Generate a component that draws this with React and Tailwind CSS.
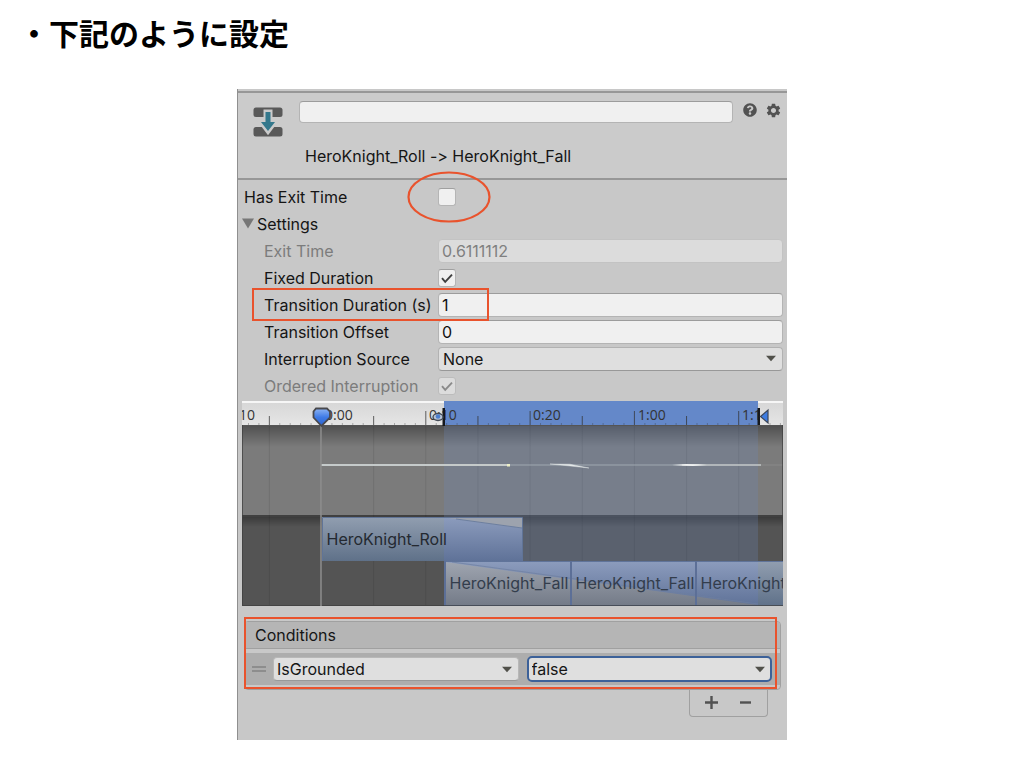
import React, { useState } from 'react';
import { FaQuestionCircle } from 'react-icons/fa';
import { MdSettings } from 'react-icons/md';

const rulerLabels = [
  { x: -3, text: '10' },
  { x: 83, text: '0:00' },
  { x: 187, text: '0:10' },
  { x: 291, text: '0:20' },
  { x: 396, text: '1:00' },
  { x: 500, text: '1:1' },
];

const ticks = Array.from({ length: 52 }, (_, i) => ({
  x: 79.5 + (i - 7) * 10.43,
  major: (i - 7) % 10 === 0,
  mid: (i - 7) % 5 === 0,
})).filter((tick) => tick.x < 541);

const fallClips = [
  { x: 203, width: 125 },
  { x: 329, width: 124 },
  { x: 454, width: 87 },
];

function Caret() {
  return (
    <svg viewBox="0 0 12 7" className="pointer-events-none absolute right-1.5 h-[7px] w-3" aria-hidden="true">
      <path d="M1 0.8h10L6 6.300z" fill="#50504a" />
    </svg>
  );
}

function Checkbox({ id, checked, disabled, onChange }) {
  return (
    <span className="relative flex h-[18px] w-[18px]">
      <input
        id={id}
        type="checkbox"
        checked={checked}
        disabled={disabled}
        onChange={onChange}
        className="h-[18px] w-[18px] appearance-none rounded-[3px] border border-[#b5b5b5] border-t-[#a0a0a0] bg-[#f0f0f0] disabled:border-[#bcbcbc] disabled:bg-[#dcdcdc]"
      />
      {checked && (
        <svg viewBox="0 0 18 18" className="pointer-events-none absolute inset-0" aria-hidden="true">
          <path d="M4 9.2l3.2 3.6L14 5.6" fill="none" stroke={disabled ? '#8a8a8a' : '#3f3f3f'} strokeWidth="1.9" />
        </svg>
      )}
    </span>
  );
}

function TextField({ id, value, disabled, onChange }) {
  return (
    <input
      id={id}
      type="text"
      value={value}
      disabled={disabled}
      onChange={onChange}
      className="h-6 w-full rounded-[4px] border border-[#b4b4b4] border-t-[#9c9c9c] bg-[#f0f0f0] px-[3px] text-base text-[#111] disabled:border-[#c3c3c3] disabled:bg-[#dcdcdc] disabled:text-[#808080]"
    />
  );
}

function Row({ id, label, disabled, top, children, mark }) {
  return (
    <div className="relative flex h-[27px] items-center pr-1">
      <label
        htmlFor={id}
        className={`w-[200px] shrink-0 whitespace-nowrap ${top ? 'pl-1.5' : 'pl-[26px]'} ${disabled ? 'text-[#7c7c7c]' : ''}`}
      >
        {label}
      </label>
      <div className="flex flex-1 items-center">{children}</div>
      {mark}
    </div>
  );
}

function TransitionIcon() {
  return (
    <svg viewBox="0 0 30 30" className="h-[30px] w-[30px]" aria-hidden="true">
      <rect x="0.5" y="0.5" width="29" height="9.5" rx="2.5" fill="#595959" />
      <rect x="0.5" y="20" width="29" height="9.5" rx="2.5" fill="#595959" />
      <path d="M12.5 4.5h5v10.5h5L15 25 7.5 15h5z" fill="#cbcbcb" stroke="#cbcbcb" strokeWidth="4" />
      <path d="M12.5 5h5v10H22L15 24 8 15h4.500z" fill="#34788c" />
    </svg>
  );
}

function Timeline() {
  return (
    <svg
      viewBox="0 0 541 205"
      className="block w-full"
      fontFamily="Inter, 'Liberation Sans', sans-serif"
      fontSize="16"
      role="img"
      aria-label="Transition timeline"
    >
      <defs>
        <linearGradient id="ruler" x1="0" y1="0" x2="0" y2="1">
          <stop offset="0" stopColor="#d6d6d6" />
          <stop offset="1" stopColor="#e6e6e6" />
        </linearGradient>
        <linearGradient id="shade" x1="0" y1="0" x2="0" y2="1">
          <stop offset="0" stopColor="#000" stopOpacity="0.36" />
          <stop offset="1" stopColor="#000" stopOpacity="0" />
        </linearGradient>
        <linearGradient id="clip" x1="0" y1="0" x2="0" y2="1">
          <stop offset="0" stopColor="#919eb0" />
          <stop offset="1" stopColor="#5f7189" />
        </linearGradient>
        <linearGradient id="clipSelected" x1="0" y1="0" x2="0" y2="1">
          <stop offset="0" stopColor="#8c9cbd" />
          <stop offset="1" stopColor="#5f7298" />
        </linearGradient>
        <linearGradient id="fade" x1="0" y1="0" x2="0" y2="1">
          <stop offset="0" stopColor="#a0a6b1" />
          <stop offset="1" stopColor="#737a87" />
        </linearGradient>
        <linearGradient id="marker" x1="0" y1="0" x2="0" y2="1">
          <stop offset="0" stopColor="#8db4f4" />
          <stop offset="0.5" stopColor="#3f7be6" />
          <stop offset="1" stopColor="#2c62cc" />
        </linearGradient>
        {fallClips.map((clip, i) => (
          <clipPath id={`fall${i}`} key={clip.x}>
            <rect x={clip.x} y="160" width={clip.width} height="44" />
          </clipPath>
        ))}
      </defs>

      {/* Ruler */}
      <rect width="541" height="25" fill="url(#ruler)" />
      <rect width="541" height="2" fill="#f6f6f6" />
      <rect x="202" width="314" height="25" fill="#6488c9" />
      {ticks.map((tick) => (
        <line
          key={tick.x}
          x1={tick.x}
          x2={tick.x}
          y1={tick.major ? 10 : tick.mid ? 15 : 22}
          y2="24"
          stroke="#333"
          strokeOpacity={tick.mid ? 0.75 : 0.35}
        />
      ))}
      <g fill="#333" fontSize="14" fontFamily="'Open Sans', sans-serif">
        {rulerLabels.map((label) => (
          <text key={label.x} x={label.x} y="19">{label.text}</text>
        ))}
      </g>

      {/* Tracks */}
      <rect y="24" width="541" height="90" fill="#7b7b7b" />
      <rect y="24" width="541" height="22" fill="url(#shade)" />
      <rect y="24" width="541" height="1" fill="#555" />
      <rect y="114" width="541" height="91" fill="#545454" />
      <rect y="114" width="541" height="12" fill="url(#shade)" />
      <rect y="114" width="541" height="2" fill="#404040" />
      {ticks.filter((tick) => tick.mid).map((tick) => (
        <line key={tick.x} x1={tick.x} x2={tick.x} y1="25" y2="204" stroke="#000" strokeOpacity="0.09" />
      ))}
      <rect x="202" y="25" width="314" height="180" fill="#6c86bc" fillOpacity="0.25" />

      {/* Curve */}
      <line x1="79" x2="266" y1="64" y2="64" stroke="#c5caca" strokeWidth="2" />
      <line x1="266" x2="440" y1="64" y2="64" stroke="#a0a8b0" />
      <line x1="440" x2="519" y1="64" y2="64" stroke="#c5caca" strokeWidth="1.5" />
      <line x1="519" x2="541" y1="64" y2="64" stroke="#8a8a8a" />
      <rect x="265" y="63" width="3" height="2.5" fill="#eef0c8" />
      <path d="M308 63L328 63.2L347 67L326 64.800z" fill="#e4e8e8" stroke="#e4e8e8" strokeWidth="0.4" />
      <path d="M430 64l14-1 12 .2 9 .8-14 1-9-.2z" fill="#f0f2f2" />

      {/* Source clip */}
      <rect x="80" y="116" width="122" height="44" fill="url(#clip)" />
      <rect x="202" y="116" width="78" height="44" fill="url(#clipSelected)" />
      <path d="M206 117L280 127V117z" fill="#9da3ae" />
      <path d="M214 118L280 127" stroke="#6d7f9f" fill="none" />
      <path d="M80.500 160V116.500H280.500V160" fill="none" stroke="#607497" />
      <text x="84.500" y="144" fill="#242930">HeroKnight_Roll</text>

      {/* Destination clips */}
      <rect x="202" y="160" width="314" height="45" fill="url(#clipSelected)" />
      <rect x="516" y="160" width="25" height="45" fill="url(#clip)" />
      <clipPath id="fadeArea">
        <path d="M203 161L516 204H203z" />
      </clipPath>
      <rect x="203" y="160" width="313" height="45" fill="url(#fade)" clipPath="url(#fadeArea)" />
      <path d="M210 161L516 203" stroke="#6d7f9f" strokeOpacity="0.7" fill="none" />
      <path d="M202 160.500H541" stroke="#60749a" fill="none" />
      {fallClips.map((clip, i) => (
        <g key={clip.x}>
          <rect x={clip.x - 1} y="160" width="2" height="45" fill="#5c6f97" />
          <text x={clip.x + 4.5} y="188" fill="#333d4c" clipPath={`url(#fall${i})`}>HeroKnight_Fall</text>
        </g>
      ))}
      <path d="M0.500 24V204.500H541M540.500 24V160" stroke="#3d3d3d" fill="none" strokeOpacity="0.7" />

      {/* Playhead and range handles */}
      <line x1="79" x2="79" y1="25" y2="205" stroke="#8f8f8f" strokeWidth="1.5" />
      <path d="M74 7.500h11l3 3v6L79.500 25 71.500 16.500v-6z" fill="url(#marker)" stroke="#48484c" strokeWidth="1.8" />
      <rect x="200.500" y="7" width="2.500" height="18" fill="#16181c" />
      <ellipse cx="196" cy="16" rx="5" ry="3.500" fill="#b9c4d6" stroke="#444b56" strokeWidth="1.4" />
      <circle cx="196" cy="15.500" r="2.300" fill="#4d7fce" />
      <rect x="515.500" y="7" width="2.500" height="17" fill="#16181c" />
      <path d="M518.500 15.500L526 9V22z" fill="#3e7ce0" stroke="#3c4658" strokeWidth="1.2" />
    </svg>
  );
}

function App() {
  const [name, setName] = useState('');
  const [hasExitTime, setHasExitTime] = useState(false);
  const [fixedDuration, setFixedDuration] = useState(true);
  const [duration, setDuration] = useState('1');
  const [offset, setOffset] = useState('0');
  const [source, setSource] = useState('None');
  const [parameter, setParameter] = useState('IsGrounded');
  const [value, setValue] = useState('false');

  return (
    <main className="min-h-screen bg-white pb-7">
      <h1 className="pt-[17px] pl-[19px] font-['Noto_Sans_CJK_JP',sans-serif] text-3xl leading-[30px] font-bold text-black">
        ・下記のように設定
      </h1>

      <section className="mx-auto mt-[42px] w-full max-w-[550px] border-l border-[#8f8f8f] bg-[#c8c8c8] pt-0.5 pb-[23px] font-['Inter','Liberation_Sans',sans-serif] text-base leading-6 text-[#151515]">
        {/* Header */}
        <header className="flex border-y-2 border-[#979797] bg-[#cbcbcb] pt-2 pb-2.5 pl-[15px]">
          <div className="pt-1.5">
            <TransitionIcon />
          </div>
          <div className="ml-4 flex-1">
            <input
              type="text"
              aria-label="Transition name"
              value={name}
              onChange={(e) => setName(e.target.value)}
              className="block h-[22px] w-full rounded-[4px] border border-[#b4b4b4] border-t-[#9c9c9c] bg-[#f0f0f0] px-1"
            />
            <p className="mt-[21px] pl-1.5 [font-feature-settings:'calt'_0]">HeroKnight_Roll -&gt; HeroKnight_Fall</p>
          </div>
          <div className="flex h-[18px] items-center gap-2 pr-[5px] pl-2.5 text-[#525252]">
            <button type="button" aria-label="Help">
              <FaQuestionCircle size={14} />
            </button>
            <button type="button" aria-label="Settings menu">
              <MdSettings size={17} />
            </button>
          </div>
        </header>

        {/* Transition settings */}
        <div className="mt-[3px] mb-0.5">
          <Row
            id="hasExitTime"
            label="Has Exit Time"
            top
            mark={
              <svg viewBox="0 0 84 52" className="pointer-events-none absolute -top-3 left-[169px] h-[52px] w-[84px]" aria-hidden="true">
                <ellipse cx="42" cy="26" rx="40.5" ry="24.5" fill="none" stroke="#e9532d" strokeWidth="2.2" />
              </svg>
            }
          >
            <Checkbox id="hasExitTime" checked={hasExitTime} onChange={() => setHasExitTime(!hasExitTime)} />
          </Row>
          <button type="button" className="flex h-[27px] items-center gap-[3px] pl-1">
            <svg viewBox="0 0 12 11" className="h-[11px] w-3" aria-hidden="true">
              <path d="M0 0.5h12L6 10.5z" fill="#777" />
            </svg>
            Settings
          </button>
          <Row id="exitTime" label="Exit Time" disabled>
            <TextField id="exitTime" value="0.6111112" disabled />
          </Row>
          <Row id="fixedDuration" label="Fixed Duration">
            <Checkbox id="fixedDuration" checked={fixedDuration} onChange={() => setFixedDuration(!fixedDuration)} />
          </Row>
          <Row
            id="duration"
            label="Transition Duration (s)"
            mark={<span className="pointer-events-none absolute -top-[3px] left-3.5 z-10 h-[33px] w-[237px] border-2 border-[#e9532d]" />}
          >
            <TextField id="duration" value={duration} onChange={(e) => setDuration(e.target.value)} />
          </Row>
          <Row id="offset" label="Transition Offset">
            <TextField id="offset" value={offset} onChange={(e) => setOffset(e.target.value)} />
          </Row>
          <Row id="source" label="Interruption Source">
            <span className="relative flex w-full items-center">
              <select
                id="source"
                value={source}
                onChange={(e) => setSource(e.target.value)}
                className="h-6 w-full appearance-none rounded-[4px] border border-[#b2b2b2] border-b-[#989898] bg-[#dfdfdf] px-1 leading-5"
              >
                <option>None</option>
                <option>Current State</option>
                <option>Next State</option>
              </select>
              <Caret />
            </span>
          </Row>
          <Row id="ordered" label="Ordered Interruption" disabled>
            <Checkbox id="ordered" checked disabled />
          </Row>
        </div>

        <div className="mx-1">
          <Timeline />
        </div>

        {/* Conditions */}
        <div className="relative mt-[15px] mr-1.5 ml-1.5">
          <div className="rounded-[4px] border border-[#a0a0a0]">
            <h2 className="h-[27px] rounded-t-[3px] border-b border-[#a0a0a0] bg-[#b5b5b5] pl-2.5 leading-[26px]">Conditions</h2>
            <div className="mt-1 mb-1 flex h-8 items-center bg-[#adadad] pr-2 pl-[7px]">
              <span className="mr-[7px] h-[6px] w-3.5 shrink-0 border-y-2 border-[#8d8d8d]" />
              <span className="relative flex flex-1 items-center">
                <select
                  aria-label="Condition parameter"
                  value={parameter}
                  onChange={(e) => setParameter(e.target.value)}
                  className="h-6 w-full appearance-none rounded-[4px] border border-[#b8b8b8] border-b-[#989898] bg-[#dfdfdf] px-[3px] leading-5"
                >
                  <option>IsGrounded</option>
                </select>
                <Caret />
              </span>
              <span className="relative ml-2 flex flex-1 items-center">
                <select
                  aria-label="Condition value"
                  value={value}
                  onChange={(e) => setValue(e.target.value)}
                  className="h-[26px] w-full appearance-none rounded-[5px] border-2 border-[#3c6199] bg-[#dfdfdf] px-[3px] leading-5"
                >
                  <option>false</option>
                  <option>true</option>
                </select>
                <Caret />
              </span>
            </div>
          </div>
          <span className="pointer-events-none absolute -top-1 right-1 bottom-px left-0 border-2 border-[#e9532d]" />
        </div>
        <div className="mr-[19px] ml-auto flex h-[27px] w-[79px] items-center justify-center gap-[19px] rounded-b-[4px] border border-t-0 border-[#a0a0a0] pb-0.5">
          <button type="button" aria-label="Add condition">
            <svg viewBox="0 0 15 15" className="h-[15px] w-[15px]" aria-hidden="true">
              <path d="M7.5 1v13M1 7.5h13" stroke="#525252" strokeWidth="2.4" />
            </svg>
          </button>
          <button type="button" aria-label="Remove condition">
            <svg viewBox="0 0 15 15" className="h-[15px] w-[15px]" aria-hidden="true">
              <path d="M2 7.5h11" stroke="#525252" strokeWidth="2.4" />
            </svg>
          </button>
        </div>
      </section>
    </main>
  );
}

export default App;
